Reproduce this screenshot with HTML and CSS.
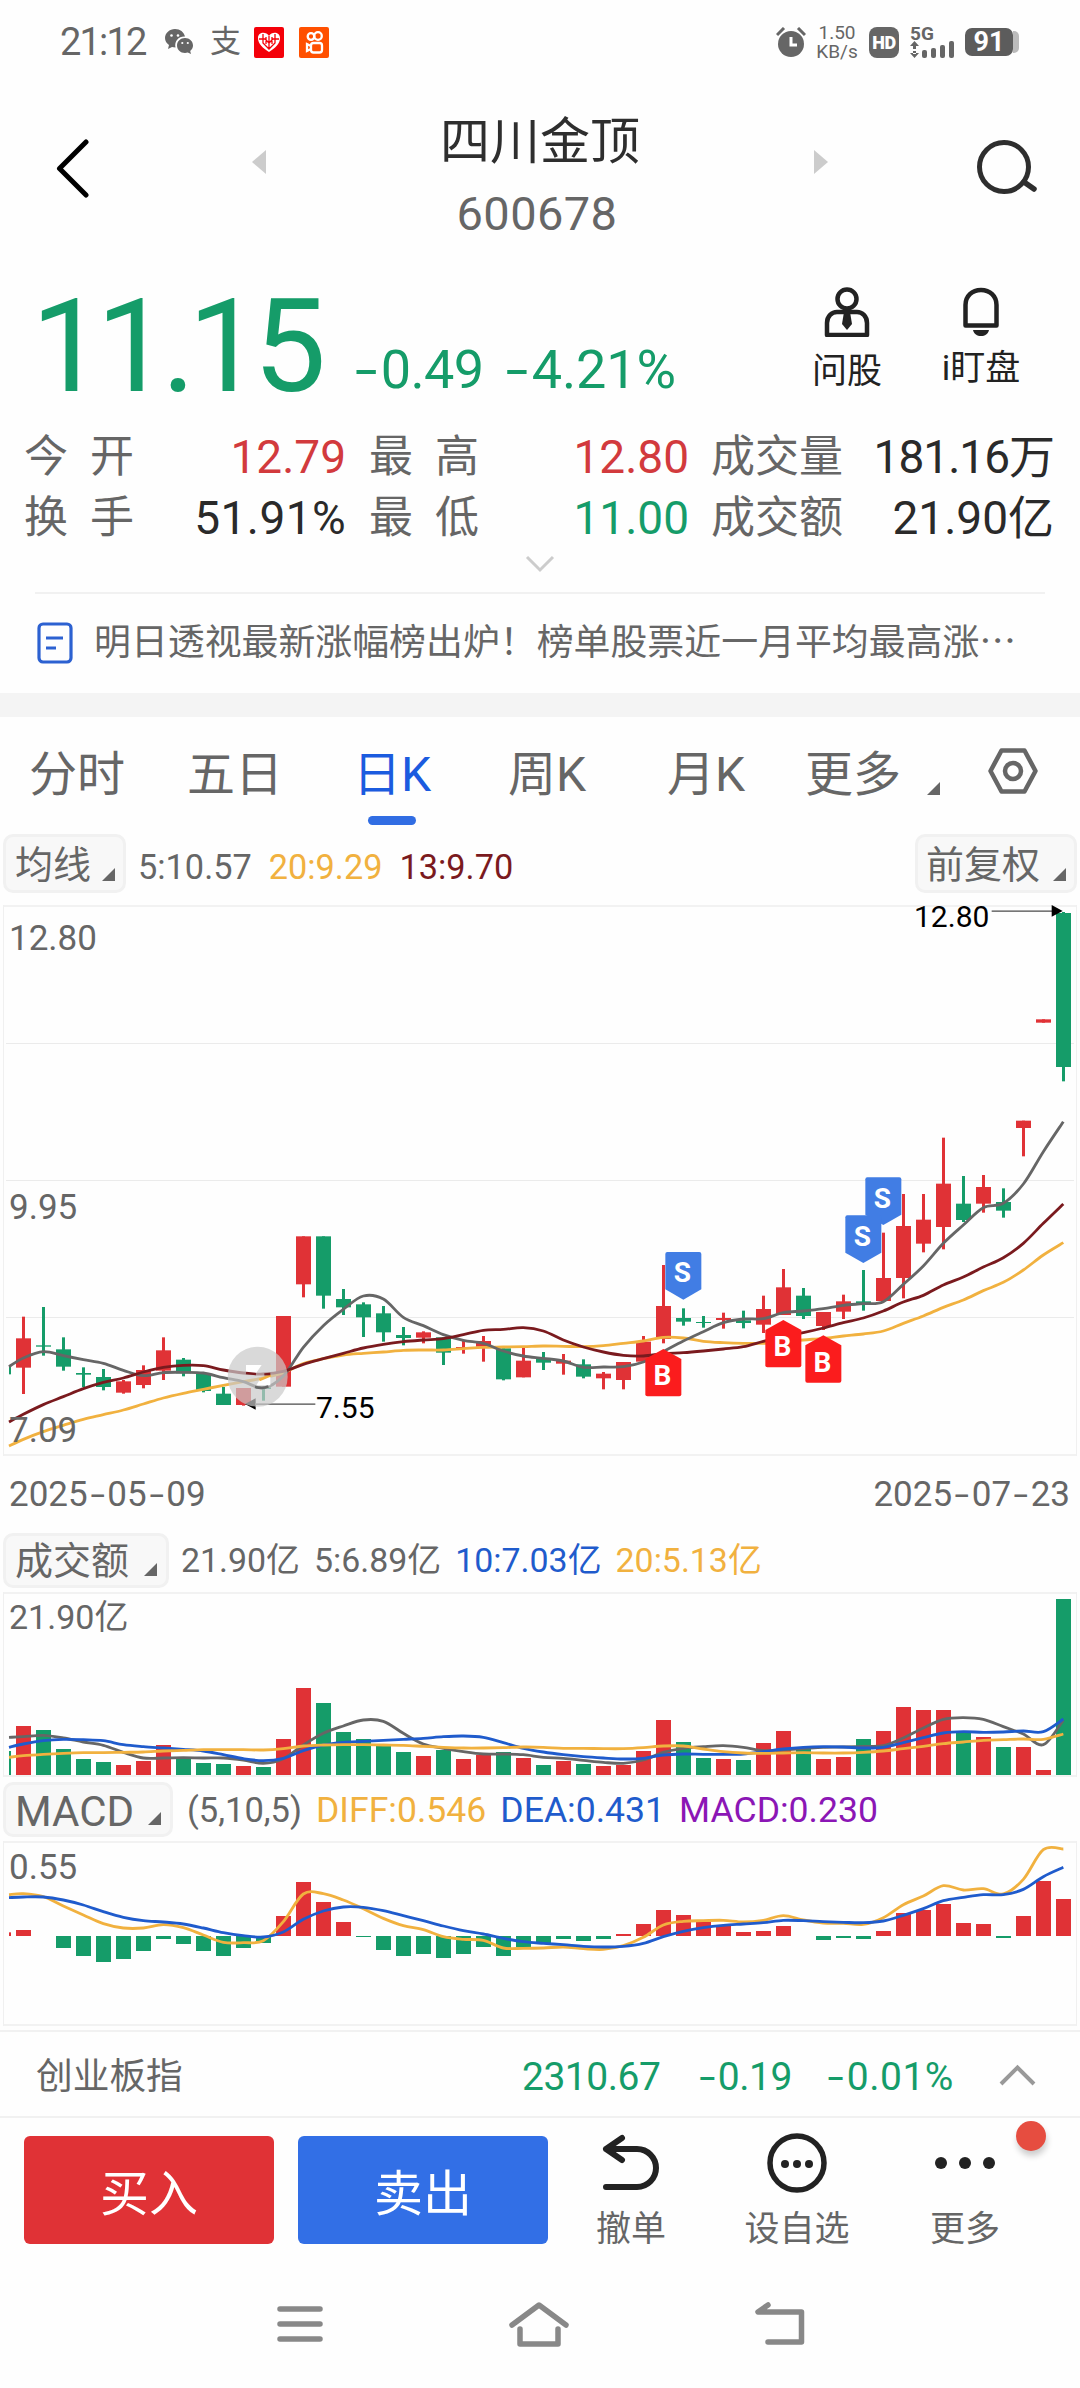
FILE: index.html
```html
<!DOCTYPE html>
<html lang="zh-CN">
<head>
<meta charset="utf-8">
<title>四川金顶 600678</title>
<link rel="stylesheet" href="styles.css">
</head>
<body>
<div class="status">
  <span class="clock">21:12</span>
  <svg class="wechat" width="30" height="26" viewBox="0 0 30 26"><path fill="#666" d="M10 0C4.500 0 0 4 0 9c0 3 1.500 5.300 4 7l-1 4 4-2c1 .3 2 .4 3.500.4C9 12 14 7 20 7.500 19 3 15 0 10 0z"/><path fill="#666" d="M20 9c-4.500 0-8 3.400-8 7.500s3.500 7.500 8 7.500l2.800-.5L26 25l-.8-3c1.800-1.400 2.800-3.300 2.800-5.500C28 12.400 24.500 9 20 9z"/><g fill="#fff"><circle cx="6.500" cy="6.500" r="1.300"/><circle cx="13" cy="6.500" r="1.300"/><circle cx="17.300" cy="14" r="1.100"/><circle cx="22.800" cy="14" r="1.100"/></g></svg>
  <span class="alipay">支</span>
  <svg class="app" width="30" height="31" viewBox="0 0 30 31"><rect width="30" height="31" rx="2" fill="#f40009"/><path d="M15 25C9 21 4 17 4 11c0-6 8-7 11-2 3-5 11-4 11 2 0 6-5 10-11 14z" fill="#fff"/><path d="M9 7v9l6 6 6-6V7M5 12h6l4 4 4-4h6M12 10v7M18 10v7M15 9v14" fill="none" stroke="#f40009" stroke-width="1.300"/></svg>
  <svg class="app" width="30" height="31" viewBox="0 0 30 31"><rect width="30" height="31" rx="2" fill="#ff5000"/><g fill="none" stroke="#fff" stroke-width="2.300"><circle cx="12" cy="9.500" r="3.300"/><circle cx="19" cy="9" r="3.800"/><rect x="12" y="16" width="11" height="9.500" rx="2.500"/><path d="M12 19l-4-2v7l4-2"/></g></svg>
  <svg class="alarm" width="30" height="31" viewBox="0 0 30 31"><circle cx="15" cy="17" r="13" fill="#666"/><path d="M1 8l7-7M29 8l-7-7" stroke="#666" stroke-width="3"/><path d="M15 10v8h6" fill="none" stroke="#fff" stroke-width="3"/></svg>
  <span class="speed"><span>1.50</span><span>KB/s</span></span>
  <span class="hd">HD</span>
  <span class="net"><span class="five-g">5G</span><svg width="46" height="17" viewBox="0 0 46 17"><g fill="#666"><path d="M0 5l4.500-5L9 5zM3 5h3v3H3zM0 12l4.500 5L9 12zM3 10h3v3H3z"/><rect x="12" y="9" width="5" height="8" rx="2"/><rect x="21" y="7" width="5" height="10" rx="2"/><rect x="30" y="4" width="5" height="13" rx="2"/><rect x="39" y="0" width="5" height="17" rx="2"/></g></svg></span>
  <span class="battery">91</span><i class="cap"></i>
</div>

<header class="header">
  <svg class="back" width="33" height="59" viewBox="0 0 33 59"><path d="M30 3L3.500 29.500 30 56" fill="none" stroke="#000" stroke-width="5" stroke-linecap="round" stroke-linejoin="round"/></svg>
  <svg class="step" width="14" height="24" viewBox="0 0 14 24"><path d="M14 0v24L0 12z" fill="#ccc"/></svg>
  <div class="title"><h1>四川金顶</h1><p>600678</p></div>
  <svg class="step" width="14" height="24" viewBox="0 0 14 24"><path d="M0 0v24l14-12z" fill="#ccc"/></svg>
  <svg class="search" width="62" height="56" viewBox="0 0 62 56"><circle cx="27" cy="28" r="24.500" fill="none" stroke="#2e2e2e" stroke-width="5"/><path d="M47 43l10 7" stroke="#2e2e2e" stroke-width="5.500" stroke-linecap="round"/></svg>
</header>

<section class="quote">
  <span class="price">11.15</span>
  <span class="delta"><i class="dash">-</i>0.49</span>
  <span class="delta pct"><i class="dash">-</i>4.21%</span>
  <div class="tool ask">
    <svg width="48" height="50" viewBox="0 0 48 50"><g fill="none" stroke="#222" stroke-width="4.500"><circle cx="24" cy="12" r="9.500"/><path d="M4 48V36c0-7 5-11 10-11h20c5 0 10 4 10 11v12z" stroke-linejoin="round"/></g><path d="M21 25h6l2 12-5 6-5-6z" fill="#222"/></svg>
    <span>问股</span>
  </div>
  <div class="tool watch">
    <svg width="38" height="50" viewBox="0 0 38 50"><path d="M3.500 38.500V18C3.500 9 10 3 19 3s15.500 6 15.500 15v20.500z" fill="none" stroke="#222" stroke-width="4.500" stroke-linejoin="round"/><path d="M11 43h16c-1 4-4 6-8 6s-7-2-8-6z" fill="#222"/></svg>
    <span>i盯盘</span>
  </div>
</section>

<section class="stats">
  <span class="name">今<i></i>开</span><b class="up">12.79</b><span class="name">最<i></i>高</span><b class="up">12.80</b><span class="name">成交量</span><b class="tight">181.16万</b>
  <span class="name">换<i></i>手</span><b class="wide">51.91%</b><span class="name">最<i></i>低</span><b class="down">11.00</b><span class="name">成交额</span><b>21.90亿</b>
</section>
<div class="expand"><svg width="30" height="18" viewBox="0 0 30 18"><path d="M2 2l13 13L28 2" fill="none" stroke="#ccc" stroke-width="3"/></svg></div>
<section class="news">
  <svg width="36" height="42" viewBox="0 0 36 42"><rect x="2" y="2" width="32" height="38" rx="4" fill="none" stroke="#2c61d1" stroke-width="3.200"/><path d="M9 16h17M9 26h10" stroke="#2c61d1" stroke-width="3.200"/></svg>
  <span>明日透视最新涨幅榜出炉！榜单股票近一月平均最高涨…</span>
</section>
<div class="band"></div>

<nav class="tabs">
  <a>分时</a><a>五日</a><a class="on">日K</a><a>周K</a><a>月K</a><a>更多</a>
  <svg class="tri" width="13" height="13" viewBox="0 0 13 13"><path d="M13 0v13H0z" fill="#666"/></svg>
  <svg class="gear" width="50" height="46" viewBox="0 0 50 46"><g fill="none" stroke="#666" stroke-width="4.500" stroke-linejoin="round"><path d="M13.500 2.500h23L47.500 23l-11 20.500h-23L2.500 23z"/><circle cx="25" cy="23" r="8"/></g></svg>
</nav>

<div class="legend ma">
  <span class="chip">均线<svg width="13" height="13" viewBox="0 0 13 13"><path d="M13 0v13H0z" fill="#666"/></svg></span>
  <span class="k1">5:10.57</span><span class="yellow k2">20:9.29</span><span class="maroon">13:9.70</span>
  <span class="chip right">前复权<svg width="13" height="13" viewBox="0 0 13 13"><path d="M13 0v13H0z" fill="#666"/></svg></span>
</div>
<svg id="price" class="chart" width="1080" height="551" viewBox="0 -735 3240 1653"></svg>
<div class="dates"><span>2025<i class="dash">-</i>05<i class="dash">-</i>09</span><span>2025<i class="dash">-</i>07<i class="dash">-</i>23</span></div>

<div class="legend vol">
  <span class="chip">成交额<svg width="13" height="13" viewBox="0 0 13 13"><path d="M13 0v13H0z" fill="#666"/></svg></span>
  <span>21.90亿</span><span>5:6.89亿</span><span class="blue">10:7.03亿</span><span class="yellow">20:5.13亿</span>
</div>
<svg id="volume" class="chart" width="1080" height="185" viewBox="0 276 3240 555"></svg>

<div class="legend macd">
  <span class="chip">MACD<svg width="13" height="13" viewBox="0 0 13 13"><path d="M13 0v13H0z" fill="#666"/></svg></span>
  <span class="params">(5,10,5)</span><span class="yellow">DIFF:0.546</span><span class="blue">DEA:0.431</span><span class="purple">MACD:0.230</span>
</div>
<svg id="macd" class="chart" width="1080" height="185" viewBox="0 183 3240 555"></svg>

<section class="index">
  <span class="iname">创业板指</span>
  <span class="v1">2310.67</span><span class="v2"><i class="dash">-</i>0.19</span><span class="v3"><i class="dash">-</i>0.01%</span>
  <svg width="37" height="22" viewBox="0 0 37 22"><path d="M2 20L18.500 3.500 35 20" fill="none" stroke="#999" stroke-width="4"/></svg>
</section>

<section class="actions">
  <button class="buy">买入</button><button class="sell">卖出</button>
  <div class="act a1"><svg width="60" height="60" viewBox="0 0 60 60"><path d="M21 5L5 16l16 11M5 16h31a19 19 0 0 1 0 38H5" fill="none" stroke="#222" stroke-width="6" stroke-linecap="round" stroke-linejoin="round"/></svg><span>撤单</span></div>
  <div class="act a2"><svg width="60" height="60" viewBox="0 0 60 60"><circle cx="30" cy="30" r="27" fill="none" stroke="#222" stroke-width="5.500"/><g fill="#222"><circle cx="18" cy="31" r="4"/><circle cx="30" cy="31" r="4"/><circle cx="42" cy="31" r="4"/></g></svg><span>设自选</span></div>
  <div class="act a3"><svg width="62" height="60" viewBox="0 0 62 60"><g fill="#222"><circle cx="7" cy="30" r="6"/><circle cx="31" cy="30" r="6"/><circle cx="55" cy="30" r="6"/></g></svg><span>更多</span><i class="badge"></i></div>
</section>

<footer class="sysnav">
  <svg width="46" height="38" viewBox="0 0 46 38"><path d="M3 4h40M3 19h40M3 34h40" stroke="#888" stroke-width="5.500" stroke-linecap="round"/></svg>
  <svg width="60" height="46" viewBox="0 0 60 46"><path d="M3 24L30 4l27 20M11 28v15h38V28" fill="none" stroke="#888" stroke-width="5.500" stroke-linecap="round" stroke-linejoin="round"/></svg>
  <svg width="50" height="44" viewBox="0 0 50 44"><path d="M13 3L3 10h43.500v30H13" fill="none" stroke="#888" stroke-width="5.500" stroke-linecap="round" stroke-linejoin="round"/></svg>
</footer>
<script src="chart.js"></script>
</body>
</html>
```
FILE: styles.css
```css
* { box-sizing: border-box; margin: 0; padding: 0; }
body { width: 1080px; height: 2388px; background: #fefefe; color: #666; font-family: Roboto, "Noto Sans CJK SC", sans-serif; overflow: hidden; }
svg { display: block; flex: none; }
i { font-style: normal; }
span { white-space: nowrap; }
.dash { display: inline-block; width: .56em; text-align: center; transform: scaleX(1.5); }

.status { display: flex; align-items: center; height: 84px; padding-left: 60px; }
.clock { font-size: 38px; letter-spacing: -1.800px; width: 105px; }
.wechat { margin-right: 15px; }
.alipay { font-size: 31px; line-height: 40px; width: 44px; }
.app { margin-right: 15px; }
.alarm { margin-left: 432px; }
.speed { display: flex; flex-direction: column; align-items: center; margin-left: 10px; width: 42px; font-size: 19px; line-height: 19px; }
.hd { width: 30px; height: 31px; margin-left: 11px; border-radius: 8px; background: #666; color: #fff; font-size: 18px; font-weight: 900; line-height: 31px; text-align: center; letter-spacing: -.5px; }
.net { display: flex; flex-direction: column; margin-left: 11px; width: 46px; }
.five-g { font-size: 19px; font-weight: 700; line-height: 14px; height: 14px; }
.battery { width: 48px; height: 28px; margin-left: 9px; border-radius: 7px; background: #5c5c5c; color: #fff; font-size: 27px; font-weight: 700; line-height: 29px; text-align: center; }
.cap { width: 6px; height: 22px; background: #bbb; border-radius: 0 5px 5px 0; }

.header { display: grid; grid-template-columns: 252px 14px 1fr 14px 252px; height: 176px; }
.back { margin: 55px 0 0 56px; }
.step { margin-top: 66px; }
.title { text-align: center; padding-top: 21px; }
.title h1 { font-size: 50px; font-weight: 400; line-height: 74px; color: #2e2e2e; }
.title p { font-size: 47px; line-height: 56px; margin-top: 7px; margin-right: 6px; letter-spacing: .4px; }
.search { margin: 55px 0 0 149px; }

.quote { display: flex; height: 155px; padding-left: 31px; color: #159c69; }
.price { font-size: 130px; line-height: 152px; letter-spacing: -7.800px; width: 320px; padding-top: 11px; }
.delta { font-size: 54px; line-height: 62px; letter-spacing: -.6px; padding-top: 79px; width: 151px; }
.delta .dash { width: .55em; }
.pct { width: 285px; letter-spacing: -.1px; }
.tool { display: flex; flex-direction: column; align-items: center; padding-top: 27px; color: #222; font-size: 35px; line-height: 50px; }
.ask { width: 120px; }
.ask span { margin-top: 10px; }
.watch { width: 148px; }
.watch span { margin-top: 7px; }

.stats { display: grid; grid-template-columns: 110px 212px 133px 210px 155px 210px; grid-auto-rows: 61px; height: 140px; padding: 12px 0 0 24px; font-size: 44px; line-height: 61px; }
.name i { display: inline-block; width: 22px; }
.name:nth-of-type(3n+2) { padding-left: 23px; }
.name:nth-of-type(3n) { padding-left: 22px; }
.stats b { font-size: 46px; font-weight: 400; color: #2a2a2a; text-align: right; }
.stats .tight { letter-spacing: -1px; }
.stats .wide { letter-spacing: .4px; }
.stats .up { color: #d23a3d; }
.stats .down { color: #159c69; }
.expand { display: flex; justify-content: center; height: 39px; margin: 0 35px; border-bottom: 2px solid #f1f1f1; }
.news { display: flex; align-items: center; height: 99px; padding-left: 37px; font: 36.900px/54px "Noto Sans CJK SC", sans-serif; }
.news span { margin: -9px 0 0 21px; }
.news svg { margin-top: -2px; }
.band { height: 24px; background: #f4f4f4; }

.tabs { display: flex; height: 115px; padding-left: 29px; font-size: 48px; line-height: 115px; }
.tabs a { width: 158px; }
.tabs a:nth-child(2) { width: 166px; }
.tabs a:nth-child(3) { width: 155px; }
.tabs a:nth-child(4) { width: 159px; }
.tabs a:nth-child(5) { width: 138px; }
.tabs a:nth-child(6) { width: 122px; }
.on { color: #1b5bdf; }
.on::after { content: ""; display: block; width: 48px; height: 9px; margin: -16px 0 0 15px; border-radius: 4.500px; background: #316de3; }
.tri { margin-top: 65px; }
.gear { margin: 31px 0 0 48px; }

.legend { display: flex; align-items: center; padding-left: 3px; font-size: 34.300px; }
.chip { display: flex; justify-content: space-between; border: 3px solid #f1f1f1; border-radius: 10px; background: #f8f8f8; font-size: 38px; }
.chip svg { align-self: flex-end; }
.ma { height: 73px; }
.ma > span { margin-top: -3px; }
.ma .chip { width: 123px; height: 59px; margin-top: -10px; padding: 0 8px 9px 9px; line-height: 57px; }
.ma .chip.right { width: 162px; margin-left: auto; margin-right: 3px; padding-left: 8px; }
.ma .k1 { margin: -3px 17px 0 12px; }
.ma .k2 { margin-right: 17px; }
.vol { height: 60px; padding-bottom: 4px; gap: 14px; font-size: 33.900px; }
.vol > span { margin-top: -6px; }
.vol .chip { width: 166px; height: 55px; margin: 0 -2px 0 0; padding: 0 9px 9px 9px; line-height: 51px; }
.macd { height: 64px; padding-top: 1px; gap: 14px; font-size: 35.600px; }
.params { font-size: 34.500px; }
.macd .chip { width: 170px; height: 55px; padding: 0 9px 9px 9px; font-size: 42px; line-height: 54px; }
.yellow { color: #f1b13f; }
.maroon { color: #7a1a1e; }
.blue { color: #1f5bcc; }
.purple { color: #8b16b5; }

.dates { display: flex; justify-content: space-between; height: 76px; padding: 0 10px 0 9px; font-size: 35px; line-height: 77px; }

.chart { overflow: visible; }
.chart text { font-size: 105px; fill: #666; }
.chart text.note { font-size: 90px; fill: #000; }
.chart text.amount { font-size: 102px; }
.chart text.flag { font-size: 84px; font-weight: 700; fill: #fff; text-anchor: middle; }

.index { display: flex; height: 88px; margin-top: 4px; padding-left: 36px; border-top: 2px solid #f1f1f1; border-bottom: 2px solid #f1f1f1; font-size: 39px; line-height: 90px; color: #159c69; }
.iname { width: 486px; color: #666; font-size: 36.700px; }
.v1 { width: 174px; letter-spacing: -.5px; }
.v2 { width: 129px; letter-spacing: -.5px; }
.v3 { width: 174px; letter-spacing: .5px; }
.index svg { margin-top: 32px; }

.actions { display: flex; height: 142px; padding: 18px 0 0 24px; }
.actions button { width: 250px; height: 108px; margin-right: 24px; border: 0; border-radius: 6px; color: #fff; font: 400 49px/108px Roboto, "Noto Sans CJK SC", sans-serif; padding-top: 5px; }
.buy { background: #e03236; }
.sell { background: #326fe6; }
.act { position: relative; display: flex; flex-direction: column; align-items: center; margin-top: -3px; font-size: 35px; line-height: 50px; width: 120px; }
.act span { margin-top: 12px; }
.a2 { margin-left: 47px; }
.a3 { margin-left: 48px; }
.a1 { width: 118px; }
.badge { position: absolute; left: 111px; top: -12px; width: 30px; height: 30px; border-radius: 50%; background: #e64d40; box-shadow: 1px 5px 6px rgba(0,0,0,.2); }

.sysnav { display: flex; justify-content: space-between; align-items: center; height: 128px; padding: 0 275px 0 277px; }
```
FILE: chart.js
```js
// Coordinates are in thirds of a pixel; day k sits at x = 70 + 60k.
const RED = '#e03236', GREEN = '#159c69';
const x = k => 70 + 60 * k;
const rect = (l, t, w, h, c) => `<rect x="${l}" y="${t}" width="${w}" height="${h}" fill="${c}"/>`;
const text = (l, b, s, cls = '') => `<text x="${l}" y="${b}" class="${cls}">${s}</text>`;

// First value of a series lies on the left clip edge, the rest on the day centres.
function curve(values, color) {
  const p = values.map((v, i) => [i ? x(i - 1) : 27, v]);
  let d = `M${p[0]}`;
  for (let i = 0; i < p.length - 1; i++) {
    const a = p[i - 1] || p[i], b = p[i], c = p[i + 1], e = p[i + 2] || c;
    d += `C${b[0] + (c[0] - a[0]) / 6} ${b[1] + (c[1] - a[1]) / 6} ${c[0] - (e[0] - b[0]) / 6} ${c[1] - (e[1] - b[1]) / 6} ${c}`;
  }
  return `<path d="${d}" fill="none" stroke="${color}" stroke-width="8.500"/>`;
}

function frame(t, b) {
  return rect(9, t, 3222, 6, '#f2f2f2') + rect(9, b - 6, 3222, 6, '#f2f2f2') +
    rect(9, t, 3, b - t, '#f0f0f0') + rect(3228, t, 3, b - t, '#f0f0f0');
}

// colour, high, body top, body bottom, low
const candles = [
  'r',500,565,653,732,'g',471,586,590,617,'g',562,598,650,662,'g',652,669,674,711,'g',657,681,711,721,'r',690,694,728,731,
  'r',646,660,705,715,'r',562,601,662,690,'g',624,629,670,679,'g',670,670,723,727,'g',711,731,765,765,'r',714,714,765,767,
  'g',712,712,717,752,'r',498,498,710,710,'r',259,259,403,442,'g',259,259,437,476,'g',417,447,472,495,'g',457,463,502,561,
  'g',468,490,547,575,'g',531,555,564,586,'r',544,547,563,580,'g',562,562,608,645,'r',572,591,597,611,'r',558,573,590,635,
  'g',595,595,688,691,'r',594,632,682,682,'g',606,627,638,660,'r',612,632,641,674,'g',628,643,680,685,'r',666,671,685,718,
  'r',636,636,690,718,'r',558,575,635,635,'r',345,468,567,580,'g',475,504,515,527,'g',498,516,519,533,'r',488,504,510,536,
  'g',482,511,519,535,'r',437,477,524,549,'r',357,412,495,495,'g',414,437,498,507,'r',486,486,528,540,'r',434,454,485,507,
  'g',360,454,463,482,'r',248,384,453,453,'r',132,228,384,445,'r',132,209,281,307,'r',-37,101,231,298,'g',78,161,210,216,
  'r',75,111,161,188,'g',115,156,182,203,'r',-88,-88,-66,19,'r',-392,-392,-382,-382,'g',-714,-711,-249,-206];

let s = frame(-735, 918);
for (const y of [-321, 90, 501]) s += rect(18, y, 3204, 3, '#ebebeb');
s += rect(27, 646, 6, 27, GREEN);
for (let k = 0; k < candles.length / 5; k++) {
  const [c, hi, t, b, lo] = candles.slice(k * 5, k * 5 + 5), col = c === 'r' ? RED : GREEN;
  s += rect(x(k) - 4, hi, 9, lo - hi, col) + rect(x(k) - 22, t, 45, b - t, col);
}
s += curve([888,868,845,826,808,794,780,762,744,730,718,706,695,684,668,641,626,615,610,606,601,600,600,596,592,591,590,588,589,590,587,580,573,562,564,574,578,580,580,576,570,565,558,552,543,520,498,472,450,422,397,360,315,278], '#f1b13f');
s += curve([650,624,605,617,629,640,661,677,668,667,669,683,695,714,678,592,527,478,438,447,502,527,554,571,580,603,618,625,633,652,651,650,636,605,573,545,518,507,506,488,483,476,466,461,455,403,348,280,225,173,160,102,5,-85], '#666');
s += curve([816,793,764,740,716,697,684,666,652,646,647,660,669,672,664,643,626,610,594,583,575,570,566,554,541,538,533,543,570,591,606,616,618,611,608,603,597,590,574,560,548,534,518,504,483,456,436,405,381,351,323,280,220,162], '#7a1a1e');

const flag = (k, y, ch, up) => {
  const shape = up ? 'M0 0l54 30v106q0 6-6 6h-96q-6 0-6-6V30z' : 'M-48 0h96q6 0 6 6v106L0 143l-54-31V6q0-6 6-6z';
  return `<g transform="translate(${x(k)} ${y})"><path d="${shape}" fill="${up ? '#fb1c1d' : '#417de4'}"/>${text(-3, up ? 109 : 91, ch, 'flag')}</g>`;
};
s += flag(43, 82, 'S') + flag(42, 196, 'S') + flag(33, 306, 'S') + flag(32, 597, 'B', 1) + flag(38, 510, 'B', 1) + flag(40, 556, 'B', 1);
s += `<path d="M735 762l32-17v34z"/>` + rect(765, 760, 181, 5, '#777') + text(948, 803, '7.55', 'note');
s += rect(2975, -719, 182, 5, '#777') + `<path d="M3188-717l-33-18v35z"/>` + text(2742, -668, '12.80', 'note');

// Expand button: a translucent disc with two opposed corners
s += `<circle cx="773" cy="680" r="90" fill="#c9c9c9" fill-opacity=".7"/><path d="M738 645h47l-18 26h-29zM811 674v32h-42l12-20z" fill="#fff"/><path d="M778 690l34-14" stroke="#f1b13f" stroke-width="8"/><path d="M738 669l30 3M793 673l18-1" stroke="#7a1a1e" stroke-width="7"/><path d="M765 711q25 6 40-2" fill="none" stroke="#666" stroke-width="8"/>`;
s += text(27, -600, '12.80') + text(27, 206, '9.95') + text(27, 877, '7.09');
document.getElementById('price').innerHTML = s;

const vol = 'r678 g690 g747 g777 g786 r795 r783 r735 g777 g789 g792 r798 g801 r717 r564 g609 g696 g717 g738 g756 r768 g750 r777 r765 g756 r774 g795 r783 g792 r798 r795 r753 r660 g726 g774 r777 g780 r729 r693 g747 r777 r771 g717 r693 r621 r630 r630 g696 r711 g741 r741 r810 g297'.split(' ');
s = frame(276, 831) + rect(27, 753, 6, 72, GREEN);
vol.forEach((v, k) => { s += rect(x(k) - 22, +v.slice(1), 45, 825 - v.slice(1), v[0] === 'r' ? RED : GREEN); });
s += curve([712,710,706,714,726,736,757,774,774,773,774,774,780,790,776,735,700,678,660,664,700,732,745,755,762,762,764,772,775,781,787,790,780,757,745,740,737,742,752,750,746,742,741,739,737,714,684,658,653,658,680,702,734,660], '#666');
s += curve([742,732,722,718,719,722,734,740,744,748,753,764,776,782,775,752,735,727,724,721,718,715,710,708,712,728,745,756,764,770,774,777,775,765,762,763,763,762,755,747,742,740,741,744,742,728,713,699,695,697,696,693,695,657], '#1f5bcc');
s += curve([772,767,763,760,758,758,757,756,753,751,749,749,749,750,746,738,735,734,734,735,736,739,742,744,744,743,741,742,745,745,746,746,743,738,738,747,755,759,760,759,758,759,759,757,753,746,739,731,726,721,719,717,718,702], '#f1b13f');
s += text(27, 387, '21.90亿', 'amount');
document.getElementById('volume').innerHTML = s;

// Bars grow from the zero line at 468: smaller values are positive.
const bars = [450,468,504,528,546,537,513,477,492,513,528,504,489,408,306,366,426,471,510,528,522,534,522,501,528,501,490,477,483,477,462,432,390,405,426,438,456,453,438,468,480,474,477,453,399,390,372,429,432,474,408,303,357];
s = frame(183, 738) + rect(27, 457, 6, 11, RED);
bars.forEach((v, k) => { s += rect(x(k) - 22, Math.min(v, 468), 45, Math.abs(468 - v), v < 468 ? RED : GREEN); });
s += curve([344,341,350,378,405,431,444,444,434,443,465,487,488,482,425,342,341,360,386,415,437,449,470,478,481,504,505,504,501,506,508,497,472,435,424,422,421,426,421,407,420,429,430,433,413,374,348,317,330,326,342,298,209,207], '#f1b13f');
s += curve([353,351,351,360,375,395,412,422,426,432,444,458,467,471,456,418,393,381,382,392,407,422,438,452,462,475,485,490,494,499,501,499,490,470,454,443,436,432,428,421,422,425,427,428,423,406,386,362,352,344,344,328,290,262], '#1f5bcc');
s += text(27, 296, '0.55');
document.getElementById('macd').innerHTML = s;
```
